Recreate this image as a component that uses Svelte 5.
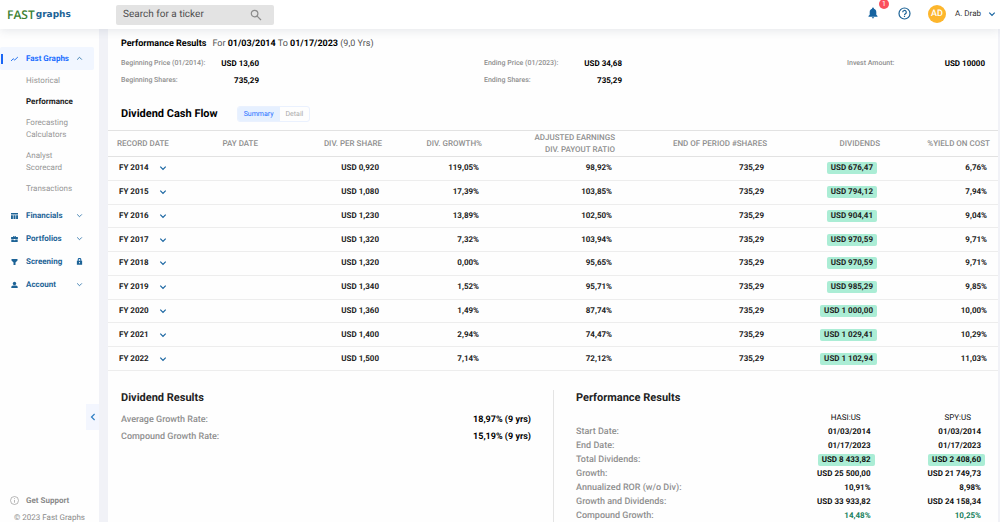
<script>
  const subLinks = ['Historical', 'Performance', 'Forecasting Calculators', 'Analyst Scorecard', 'Transactions'];
  const sections = [
    { name: 'Financials', icon: 'table' },
    { name: 'Portfolios', icon: 'case' },
    { name: 'Screening', icon: 'funnel', locked: true },
    { name: 'Account', icon: 'person' }
  ];
  const rows = [
    ['2014', '0,920', '119,05%', '98,92%', '676,47', '6,76%'],
    ['2015', '1,080', '17,39%', '103,85%', '794,12', '7,94%'],
    ['2016', '1,230', '13,89%', '102,50%', '904,41', '9,04%'],
    ['2017', '1,320', '7,32%', '103,94%', '970,59', '9,71%'],
    ['2018', '1,320', '0,00%', '95,65%', '970,59', '9,71%'],
    ['2019', '1,340', '1,52%', '95,71%', '985,29', '9,85%'],
    ['2020', '1,360', '1,49%', '87,74%', '1 000,00', '10,00%'],
    ['2021', '1,400', '2,94%', '74,47%', '1 029,41', '10,29%'],
    ['2022', '1,500', '7,14%', '72,12%', '1 102,94', '11,03%']
  ];
  const results = [
    { label: 'Start Date:', a: '01/03/2014', b: '01/03/2014' },
    { label: 'End Date:', a: '01/17/2023', b: '01/17/2023' },
    { label: 'Total Dividends:', a: 'USD 8 433,82', b: 'USD 2 408,60', pill: true },
    { label: 'Growth:', a: 'USD 25 500,00', b: 'USD 21 749,73' },
    { label: 'Annualized ROR (w/o Div):', a: '10,91%', b: '8,98%' },
    { label: 'Growth and Dividends:', a: 'USD 33 933,82', b: 'USD 24 158,34' },
    { label: 'Compound Growth:', a: '14,48%', b: '10,25%', green: true }
  ];
  let mode = $state('Summary');
</script>

{#snippet chevron(up = false)}
  <svg class="chev" viewBox="0 0 8 8" aria-hidden="true"><path d={up ? 'M1.3 5.3 4 2.6l2.7 2.7' : 'M1.3 2.7 4 5.4l2.7-2.7'} /></svg>
{/snippet}

<div class="app">
  <header>
    <a class="logo" href="#home"><span class="fast">FAST</span><span class="graphs">graphs</span></a>
    <form class="search" role="search">
      <input type="text" aria-label="Search for a ticker" placeholder="Search for a ticker" />
      <button type="button" aria-label="Search">
        <svg width="12" height="12" viewBox="0 0 12 12"><circle cx="4.6" cy="4.6" r="3.3" /><path d="m7.1 7.1 3.9 3.9" /></svg>
      </button>
    </form>
    <div class="tools">
      <button class="bell" aria-label="Notifications">
        <svg width="10" height="12" viewBox="0 0 10 12"><path d="M5 .4c.6 0 .9.4.9.9v.4c1.5.4 2.4 1.6 2.4 3.2v2.9l1.2 1.2v.7H.5V9l1.2-1.2V4.9c0-1.6.9-2.8 2.4-3.2v-.4c0-.5.3-.9.9-.9zM3.900 10.200h2.200c0 .7-.5 1.200-1.100 1.200s-1.100-.5-1.100-1.200z" /></svg>
        <span class="count">1</span>
      </button>
      <button class="help" aria-label="Help">
        <svg width="13" height="13" viewBox="0 0 13 13"><circle cx="6.5" cy="6.5" r="5.5" /><path d="M4.700 5.300a1.800 1.800 0 1 1 2.700 1.500c-.6.4-.9.7-.9 1.400M6.500 9v1.100" /></svg>
      </button>
      <button class="user"><span class="avatar">AD</span><span>A. Drab</span>{@render chevron()}</button>
    </div>
  </header>

  <div class="body">
    <aside>
      <nav>
        <a class="item current" href="#fast-graphs">
          <svg class="icon line" viewBox="0 0 8 8"><path d="M.6 6 2.700 3.700l1.500 1.300L7.400 2" /></svg>
          <span>Fast Graphs</span>{@render chevron(true)}
        </a>
        <ul>
          {#each subLinks as link}
            <li><a href="#{link}" class:on={link === 'Performance'}>{link}</a></li>
          {/each}
        </ul>
        {#each sections as s}
          <a class="item" href="#{s.name}">
            <svg class="icon" viewBox="0 0 8 8">
              {#if s.icon === 'table'}
                <path d="M.5 1h7v1.600h-7zM.5 3.200h1.900V7H.5zM3 3.200h2V7H3zM5.600 3.200h1.900V7H5.600z" />
              {:else if s.icon === 'case'}
                <path d="M2.600 2V1h2.800v1h2v2H.6V2zM3.300 1.600V2h1.400v-.4zM.8 4.500h2.400v.7h1.600v-.7h2.400V7H.8z" />
              {:else if s.icon === 'funnel'}
                <path d="M1 1h6v1.600L5 4.500V7H3V4.500L1 2.600z" />
              {:else}
                <circle cx="4" cy="2.500" r="1.700" /><path d="M.8 7V6c0-.9 1.500-1.400 3.200-1.400S7.200 5.100 7.200 6v1z" />
              {/if}
            </svg>
            <span>{s.name}</span>
            {#if s.locked}
              <svg class="chev lock" viewBox="0 0 8 8"><path class="bow" d="M2.500 3.400V2a1.500 1.500 0 0 1 3 0v1.400" /><path class="box" d="M1 3h6v4.800H1zM4 4.600a.7.7 0 1 0 0 1.400.7.7 0 0 0 0-1.400z" /></svg>
            {:else}{@render chevron()}{/if}
          </a>
        {/each}
      </nav>
      <button class="collapse" aria-label="Collapse menu"><svg width="6" height="8" viewBox="0 0 6 8"><path d="M4.600 1 1.500 4l3.100 3" /></svg></button>
      <footer>
        <a href="#support"><svg width="9" height="9" viewBox="0 0 9 9"><circle cx="4.500" cy="4.500" r="4" /><path d="M4.500 4v2.700M4.500 2.200v.9" /></svg>Get Support</a>
        <small>© 2023 Fast Graphs</small>
      </footer>
    </aside>

    <main>
      <section class="summary">
        <p><strong class="title">Performance Results</strong>For <b>01/03/2014</b> To <b>01/17/2023</b> (9,0 Yrs)</p>
        <div class="facts">
          <dl>
            <div><dt>Beginning Price (01/2014):</dt><dd>USD 13,60</dd></div>
            <div><dt>Beginning Shares:</dt><dd>735,29</dd></div>
          </dl>
          <dl>
            <div><dt>Ending Price (01/2023):</dt><dd>USD 34,68</dd></div>
            <div><dt>Ending Shares:</dt><dd>735,29</dd></div>
          </dl>
          <dl>
            <div><dt>Invest Amount:</dt><dd>USD 10000</dd></div>
          </dl>
        </div>
      </section>

      <div class="flow-head">
        <h2>Dividend Cash Flow</h2>
        <div class="switch">
          {#each ['Summary', 'Detail'] as m}
            <button class:on={mode === m} aria-pressed={mode === m} onclick={() => (mode = m)}>{m}</button>
          {/each}
        </div>
      </div>

      <table class="flow">
        <colgroup><col class="c1" /><col class="c2" /><col class="c3" /><col class="c4" /><col class="c5" /><col class="c6" /><col class="c7" /><col class="c8" /></colgroup>
        <thead>
          <tr>
            <th>RECORD DATE</th><th>PAY DATE</th><th>DIV. PER SHARE</th><th>DIV. GROWTH%</th>
            <th>ADJUSTED EARNINGS<br />DIV. PAYOUT RATIO</th><th>END OF PERIOD #SHARES</th><th>DIVIDENDS</th><th>%YIELD ON COST</th>
          </tr>
        </thead>
        <tbody>
          {#each rows as [year, share, growth, payout, dividend, cost]}
            <tr>
              <td><button class="year">FY {year}{@render chevron()}</button></td>
              <td></td>
              <td>USD {share}</td>
              <td>{growth}</td>
              <td>{payout}</td>
              <td>735,29</td>
              <td><span class="pill">USD {dividend}</span></td>
              <td>{cost}</td>
            </tr>
          {/each}
        </tbody>
      </table>

      <div class="results">
        <section class="dividend">
          <h3>Dividend Results</h3>
          <dl>
            <div><dt>Average Growth Rate:</dt><dd>18,97% (9 yrs)</dd></div>
            <div><dt>Compound Growth Rate:</dt><dd>15,19% (9 yrs)</dd></div>
          </dl>
        </section>
        <section class="performance">
          <h3>Performance Results</h3>
          <table>
            <colgroup><col class="p1" /><col class="p2" /><col class="p3" /></colgroup>
            <thead><tr><td></td><th>HASI:US</th><th>SPY:US</th></tr></thead>
            <tbody>
              {#each results as r}
                <tr class:green={r.green}>
                  <th>{r.label}</th>
                  <td><span class:pill={r.pill}>{r.a}</span></td>
                  <td><span class:pill={r.pill}>{r.b}</span></td>
                </tr>
              {/each}
            </tbody>
          </table>
        </section>
      </div>
    </main>
  </div>
</div>

<style>
  :global(body) { margin: 0; }
  * { box-sizing: border-box; }
  .app { display: flex; flex-direction: column; height: 100vh; overflow: hidden; background: #f1f2f7; font-family: Roboto, sans-serif; font-size: 8px; color: #222; text-rendering: geometricPrecision; }
  a { color: inherit; text-decoration: none; }
  button { border: 0; padding: 0; background: none; font: inherit; color: inherit; cursor: pointer; text-rendering: inherit; }
  p, h2, h3, dl, dd, ul { margin: 0; padding: 0; list-style: none; }
  svg { flex: none; display: block; }

  header { display: flex; align-items: center; flex: none; height: 29px; padding: 0 4px 0 7px; background: #fff; box-shadow: 0 2px 10px rgba(60, 70, 100, 0.12); z-index: 1; }
  .logo { display: flex; align-items: center; gap: 1px; width: 109px; }
  .fast { font: 600 12px/14px "Open Sans", sans-serif; color: #3b8132; }
  .graphs { font: 700 9px/14px "DejaVu Sans", sans-serif; color: #1d6396; }
  .search { display: flex; align-items: center; width: 158px; height: 20px; padding: 0 12px 0 7px; border-radius: 2px; background: #e3e3e3; }
  .search input { flex: 1; min-width: 0; border: 0; padding: 0; outline: 0; background: none; font: 10px Roboto, sans-serif; color: #444; text-rendering: inherit; }
  .search input::placeholder { color: #4d4d4d; opacity: 1; }
  .search svg { fill: none; stroke: #8b8b8b; stroke-width: 1.2; }
  .tools { display: flex; align-items: center; margin-left: auto; color: #1d6396; }
  .bell { position: relative; margin-right: 20px; fill: #1663a0; }
  .bell svg { margin-top: -3px; }
  .count { position: absolute; left: 11px; top: -11px; width: 10px; height: 10px; border-radius: 5px; background: #fb4f5c; color: #fff; font-size: 7px; line-height: 10px; }
  .help { margin-right: 17px; }
  .help svg { margin-top: -3px; fill: none; stroke: #1d6396; stroke-width: 1.2; }
  .user { display: flex; align-items: center; margin-top: -2px; color: #333; }
  .avatar { width: 18px; height: 18px; margin-right: 9px; border-radius: 50%; background: #fdb62c; color: #fff; font-size: 9px; font-weight: 500; line-height: 18px; text-align: center; }
  .chev { width: 8px; height: 8px; fill: none; stroke: #1663a0; stroke-width: 1.2; }
  .user .chev { margin-left: 7px; }

  .body { display: flex; flex: 1; min-height: 0; gap: 9px; padding-right: 2px; }
  aside { position: relative; display: flex; flex-direction: column; flex: none; width: 99px; padding-top: 18px; background: #fefefe; }
  .item { display: flex; align-items: center; height: 23px; padding: 0 16px 0 10px; color: #1d6396; font-weight: 700; }
  .item span { flex: 1; }
  .item .chev { width: 7px; height: 7px; stroke-width: 0.9; }
  .icon { width: 9px; height: 8px; margin-right: 7px; fill: #1d6396; }
  .icon.line { fill: none; stroke: #2a77f0; }
  .current { margin-right: 5px; padding: 0 11px 0 7px; border-radius: 2px; background: linear-gradient(#1a66f5, #1a66f5) 1px center / 2px 10px no-repeat #f1f6ff; color: #1a6dff; padding-left: 10px; }
  .lock .bow { stroke-width: 1.2; }
  .lock .box { fill: #1d6396; stroke: none; fill-rule: evenodd; }
  ul { padding: 5px 20px 0 26px; }
  li { margin-bottom: 9px; line-height: 12px; color: #969696; }
  li .on { color: #1c1c1c; font-weight: 700; }
  .collapse { position: absolute; right: 0; top: 375px; display: grid; place-items: center; width: 13px; height: 26px; background: #f3f6fe; }
  .collapse svg { fill: none; stroke: #2f7fc4; stroke-width: 1.2; }
  footer { margin-top: auto; color: #8a8a8a; font-weight: 700; }
  footer a { display: flex; align-items: center; gap: 7px; margin-left: 10px; }
  footer svg { fill: none; stroke: #999; stroke-width: 0.7; }
  footer small { display: block; margin: 8px 0 -1px 14px; font-size: 8px; font-weight: 400; line-height: 10px; }

  main { flex: 1; min-width: 0; background: #fefefe; overflow: hidden; }
  .summary { padding: 9px 13px 0; }
  .summary p { font-size: 9px; line-height: 12px; color: #555; }
  .summary b, .title { color: #000; }
  .title { margin-right: 6px; }
  .facts { display: flex; justify-content: space-between; padding-top: 5px; }
  .facts div { display: flex; justify-content: space-between; height: 17px; line-height: 17px; }
  .facts dl { width: 138px; }
  .facts dt { font-size: 7px; font-weight: 500; color: #8f8f8f; }
  .facts dd { font-weight: 700; color: #000; }
  .flow-head { display: flex; align-items: center; gap: 19px; height: 41px; padding: 8px 13px 0; }
  h2, h3 { font-size: 11px; line-height: 14px; font-weight: 700; color: #000; }
  h3 { color: #222; }
  .switch { display: flex; border: 1px solid #eaf1fe; border-radius: 3px; overflow: hidden; }
  .switch button { height: 14px; padding: 0 6px; font-size: 7px; color: #aaa; }
  .switch .on { background: #e6f0ff; color: #1a6dff; }

  table { border-collapse: collapse; width: 100%; }
  .flow { table-layout: fixed; height: 241px; }
  .flow th, .flow td { padding: 0 11px 0 0; text-align: right; font-weight: 700; border-bottom: 1px solid #ededed; white-space: nowrap; }
  .flow th { height: 26px; padding-right: 8px; border-top: 1px solid #e2e2e2; border-bottom-color: #e2e2e2; color: #8f8f8f; font-size: 8px; line-height: 12px; font-weight: 500; }
  .flow td { height: 23px; line-height: 12px; }
  .flow th:first-child { padding-left: 9px; text-align: left; }
  .flow td:first-child { padding-left: 11px; text-align: left; }
  .c1, .c2 { width: 79px; } .c3 { width: 124px; } .c4 { width: 100px; } .c5 { width: 133px; } .c6 { width: 152px; } .c7 { width: 113px; } .c8 { width: 110px; }
  .year { display: flex; align-items: center; gap: 10px; font-weight: 700; }
  .pill { display: inline-block; padding: 0 4px; border-radius: 2px; background: #abedd5; line-height: 12px; }

  .results { display: flex; padding-top: 19px; }
  .dividend { width: 50%; padding: 1px 22px 0 13px; }
  .dividend dl { padding-top: 7px; }
  .dividend div { display: flex; justify-content: space-between; height: 17px; line-height: 17px; font-size: 9px; }
  .dividend dt { font-weight: 500; color: #8f8f8f; }
  .dividend dd { font-weight: 700; color: #000; }
  .performance { flex: 1; padding: 1px 13px 0 22px; border-left: 1px solid #e4e4e4; }
  .performance table { margin-top: 6px; table-layout: fixed; }
  .performance th, .performance td { height: 14px; padding: 0 4px 0 0; text-align: right; font-weight: 700; line-height: 12px; color: #111; white-space: nowrap; }
  .performance thead th { padding-right: 14px; font-weight: 400; }
  .performance tbody th { text-align: left; font-size: 9px; font-weight: 500; color: #8f8f8f; }
  .performance .pill { margin-right: -4px; }
  .performance .green td { color: #17805c; }
  .p1 { width: 45%; } .p2 { width: 28%; } .p3 { width: 27%; }
</style>
